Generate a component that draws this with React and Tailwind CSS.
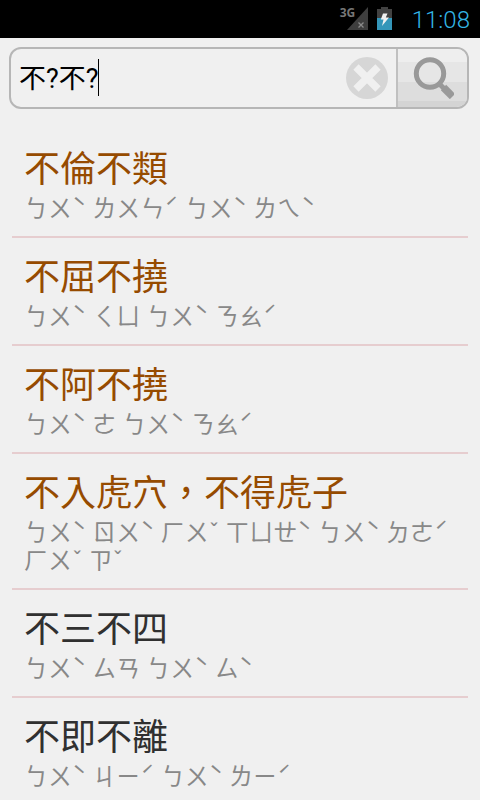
import { useState } from "react";

const entries = [
  { word: "不倫不類", phonetic: "ㄅㄨˋ ㄌㄨㄣˊ ㄅㄨˋ ㄌㄟˋ", idiom: true },
  { word: "不屈不撓", phonetic: "ㄅㄨˋ ㄑㄩ ㄅㄨˋ ㄋㄠˊ", idiom: true },
  { word: "不阿不撓", phonetic: "ㄅㄨˋ ㄜ ㄅㄨˋ ㄋㄠˊ", idiom: true },
  {
    word: "不入虎穴，不得虎子",
    phonetic: "ㄅㄨˋ ㄖㄨˋ ㄏㄨˇ ㄒㄩㄝˋ ㄅㄨˋ ㄉㄜˊ ㄏㄨˇ ㄗˇ",
    idiom: true,
  },
  { word: "不三不四", phonetic: "ㄅㄨˋ ㄙㄢ ㄅㄨˋ ㄙˋ", idiom: false },
  { word: "不即不離", phonetic: "ㄅㄨˋ ㄐㄧˊ ㄅㄨˋ ㄌㄧˊ", idiom: false },
];

const StatusBar = () => {
  return (
    <header className="flex h-[38px] items-center justify-end bg-black pr-2.5">
      {/* Signal */}
      <div className="relative mr-2 h-6 w-7">
        <svg className="h-6 w-7" viewBox="0 0 28 24" aria-hidden="true">
          <path d="M28 0V23H7z" fill="#3e3e3e" />
          <path d="M18.5 15.5l5 5M23.5 15.5l-5 5" stroke="#8a8a8a" strokeWidth="1.3" />
        </svg>
        <span className="absolute top-0 left-0 font-['Noto_Sans',sans-serif] text-xs leading-3 font-bold text-[#777777]">
          3G
        </span>
      </div>

      {/* Battery */}
      <svg className="mr-[18px] h-6 w-[18px]" viewBox="0 0 18 24" aria-label="Charging">
        <path d="M5 0h7v2h4v9H1V2h4z" fill="#424242" />
        <path d="M1 11h15v12H1z" fill="#3496b9" />
        <path d="M7 6.500h4.500L9.800 10.500H13L6 19l1.500-6.500H4.800z" fill="#f1f1f1" />
      </svg>

      <time className="pt-0.5 text-2xl leading-8 font-light text-[#33b5e5]">11:08</time>
    </header>
  );
};

const SearchBar = ({ query, setQuery }) => {
  return (
    <form
      className="mt-[9px] mr-[11px] ml-[9px] flex h-[62px] overflow-hidden rounded-xl border-2 border-[#b6b6b6]"
      onSubmit={(e) => e.preventDefault()}
    >
      <div className="relative flex min-w-0 flex-1 items-center pr-2">
        <input
          type="text"
          aria-label="Search"
          value={query}
          onChange={(e) => setQuery(e.target.value)}
          className="h-full min-w-0 flex-1 bg-transparent pb-1 pl-2 text-[27px] text-black caret-transparent outline-none"
        />
        <span className="absolute top-2.5 left-[87px] h-[37px] w-px bg-black"></span>
        <button type="button" aria-label="Clear" onClick={() => setQuery("")}>
          <svg className="h-[42px] w-[42px]" viewBox="0 0 42 42">
            <circle cx="21" cy="21" r="21" fill="#d6d6d6" />
            <path d="M10 10l22 22M32 10l-22 22" stroke="#f0f0f0" strokeWidth="7.500" />
          </svg>
        </button>
      </div>
      <button
        type="submit"
        aria-label="Go"
        className="flex w-[71px] items-center justify-center border-l-2 border-[#c0c0c0] bg-[linear-gradient(#eeeeee_0_22%,#e6e6e6_22%_57%,#dddddd_57%_90%,#d4d4d4_90%)]"
      >
        <svg className="h-[42px] w-[42px]" viewBox="0 0 42 42">
          <circle cx="18" cy="16.500" r="13.700" fill="none" stroke="#999999" strokeWidth="5" />
          <path d="M27 26.500l5 5" stroke="#999999" strokeWidth="5" />
          <path d="M31.500 30.500l9 9" stroke="#999999" strokeWidth="7.500" />
        </svg>
      </button>
    </form>
  );
};

const App = () => {
  const [query, setQuery] = useState("不?不?");

  return (
    <div className="min-h-screen bg-[#f0f0f0] font-[Roboto,'Noto_Sans_CJK_TC',sans-serif]">
      <StatusBar />
      <SearchBar query={query} setQuery={setQuery} />

      {/* Results */}
      <ul lang="zh-Hant" className="mx-3 mt-[21px]">
        {entries.map((entry) => (
          <li key={entry.word} className="border-b-2 border-[#e6cdcf] px-3 pt-[18px] pb-[13px]">
            <h2
              className={
                entry.idiom
                  ? "text-4xl leading-[44px] text-[#964b00]"
                  : "text-4xl leading-[44px] text-[#303030]"
              }
            >
              {entry.word}
            </h2>
            <p className="mt-[3px] text-2xl leading-7 text-[#888888]">{entry.phonetic}</p>
          </li>
        ))}
      </ul>
    </div>
  );
};

export default App;
